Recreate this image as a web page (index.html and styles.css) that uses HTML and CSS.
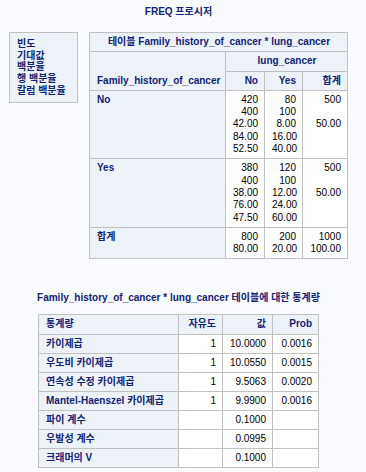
FILE: index.html
```html
<!DOCTYPE html>
<html lang="ko">
<head>
<meta charset="utf-8">
<title>FREQ 프로시저</title>
<link rel="stylesheet" href="styles.css">
</head>
<body>
<div class="page">
  <div class="proc-title">FREQ 프로시저</div>
  <div class="top">
    <div class="legend">
      <div>빈도</div>
      <div>기대값</div>
      <div>백분율</div>
      <div>행 백분율</div>
      <div>칼럼 백분율</div>
    </div>
    <table class="grid ct">
      <colgroup><col class="c1"><col class="c2"><col class="c3"><col class="c4"></colgroup>
      <thead>
        <tr><th colspan="4" class="hd center">테이블 Family_history_of_cancer * lung_cancer</th></tr>
        <tr><th rowspan="2" class="hd left bottom">Family_history_of_cancer</th><th colspan="3" class="hd center">lung_cancer</th></tr>
        <tr><th class="hd right">No</th><th class="hd right">Yes</th><th class="hd right">합계</th></tr>
      </thead>
      <tbody>
        <tr><th class="rh">No</th><td>420<br>400<br>42.00<br>84.00<br>52.50</td><td>80<br>100<br>8.00<br>16.00<br>40.00</td><td>500<br>&nbsp;<br>50.00<br>&nbsp;<br>&nbsp;</td></tr>
        <tr><th class="rh">Yes</th><td>380<br>400<br>38.00<br>76.00<br>47.50</td><td>120<br>100<br>12.00<br>24.00<br>60.00</td><td>500<br>&nbsp;<br>50.00<br>&nbsp;<br>&nbsp;</td></tr>
        <tr><th class="rh">합계</th><td>800<br>80.00</td><td>200<br>20.00</td><td>1000<br>100.00</td></tr>
      </tbody>
    </table>
  </div>
  <div class="stat-title">Family_history_of_cancer * lung_cancer 테이블에 대한 통계량</div>
  <table class="grid st">
    <colgroup><col class="s1"><col class="s2"><col class="s3"><col class="s4"></colgroup>
    <thead>
      <tr><th class="hd left">통계량</th><th class="hd right">자유도</th><th class="hd right">값</th><th class="hd right">Prob</th></tr>
    </thead>
    <tbody>
      <tr><th class="rh">카이제곱</th><td>1</td><td>10.0000</td><td>0.0016</td></tr>
      <tr><th class="rh">우도비 카이제곱</th><td>1</td><td>10.0550</td><td>0.0015</td></tr>
      <tr><th class="rh">연속성 수정 카이제곱</th><td>1</td><td>9.5063</td><td>0.0020</td></tr>
      <tr><th class="rh">Mantel-Haenszel 카이제곱</th><td>1</td><td>9.9900</td><td>0.0016</td></tr>
      <tr><th class="rh">파이 계수</th><td></td><td>0.1000</td><td></td></tr>
      <tr><th class="rh">우발성 계수</th><td></td><td>0.0995</td><td></td></tr>
      <tr><th class="rh">크래머의 V</th><td></td><td>0.1000</td><td></td></tr>
    </tbody>
  </table>
</div>
</body>
</html>
```
FILE: styles.css
```css
html, body {
  margin: 0;
  padding: 0;
  background: #fafbfe;
}
body {
  font-family: "Liberation Sans", Arial, "Noto Sans CJK KR", sans-serif;
  font-size: 10px;
  color: #000;
}
.page {
  width: 357px;
  display: flex;
  flex-direction: column;
  align-items: center;
}
.proc-title {
  padding-top: 6px;
  line-height: 12px;
  font-weight: bold;
  color: #112277;
  margin-bottom: 14px;
}
.top {
  display: flex;
  align-items: flex-start;
  gap: 11px;
}
.legend {
  box-sizing: border-box;
  width: 69px;
  background: #edf2f9;
  border: 1px solid #c1c1c1;
  padding: 5px 0 5px 7px;
  line-height: 11.7px;
  font-weight: bold;
  color: #112277;
  white-space: nowrap;
}
.grid {
  border-collapse: collapse;
  table-layout: fixed;
  border: 1px solid #c1c1c1;
}
.grid th, .grid td {
  border: 1px solid #c1c1c1;
  padding: 3px 6px 3px 7px;
  line-height: 12.3px;
  white-space: nowrap;
  overflow: hidden;
}
.grid td {
  background: #ffffff;
  text-align: right;
  vertical-align: top;
  color: #000;
}
.grid th {
  background: #edf2f9;
  color: #112277;
  font-weight: bold;
}
.hd {
  vertical-align: middle;
}
.center { text-align: center; }
.left { text-align: left; }
.right { text-align: right; }
.bottom { vertical-align: bottom; }
.rh {
  text-align: left;
  vertical-align: top;
}
.ct { width: 259px; }
.c1 { width: 136px; }
.c2 { width: 39px; }
.c3 { width: 38px; }
.c4 { width: 45px; }
.stat-title {
  margin-top: 33px;
  line-height: 12px;
  font-weight: bold;
  color: #112277;
  white-space: nowrap;
}
.st { width: 281px; margin-top: 10px; }
.st th, .st td { line-height: 12.1px; }
.s1 { width: 140px; }
.s2 { width: 44px; }
.s3 { width: 50px; }
.s4 { width: 46px; }
```
